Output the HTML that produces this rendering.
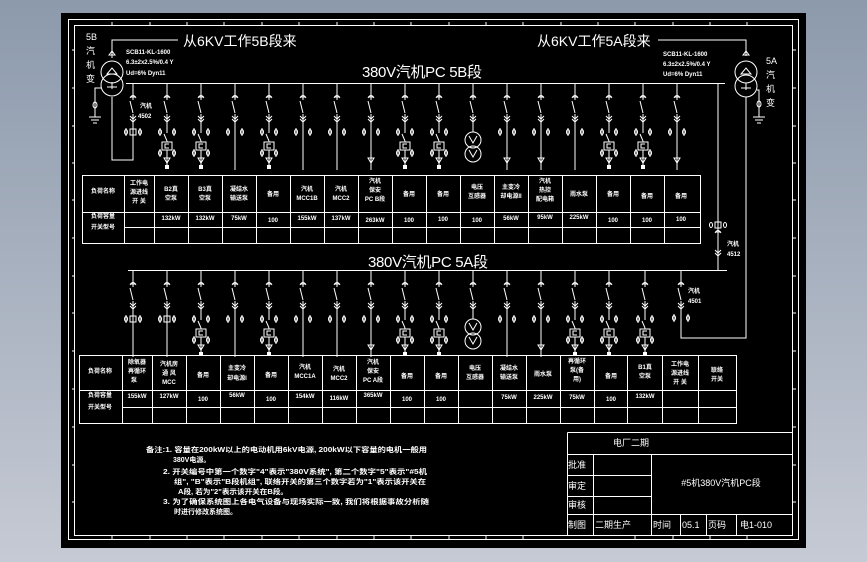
<!DOCTYPE html>
<html><head><meta charset="utf-8"><style>
html,body{margin:0;padding:0;}
body{width:867px;height:562px;overflow:hidden;background:linear-gradient(180deg,#8c9aac 0%,#a9b2c0 50%,#c6cad4 100%);}
svg{position:absolute;left:0;top:0;}
text{fill:#fff;font-family:"Liberation Sans","Noto Sans CJK SC",sans-serif;}
.t{font-size:6px;font-weight:bold;}
</style></head><body>
<svg width="867" height="562" viewBox="0 0 867 562">
<defs>
<g id="head" stroke="#fff" stroke-width="1" fill="none">
<path d="M0,0 V13 M-3,15 Q0,10 3,15 M-3,14 H3 M0,13 V17 M-3,18 L0,30 M0,31 V33 M-3,33 L0,36 L3,33 M-3,36 L0,39 L3,36 M0,33 V40"/>
</g>
<g id="ct" stroke="#fff" stroke-width="1" fill="none"><ellipse cx="-7" cy="0" rx="1.5" ry="2.5"/><path d="M-7,-4 V4"/><ellipse cx="7" cy="0" rx="1.5" ry="2.5"/><path d="M7,-4 V4"/></g>
<g id="plain"><use href="#head"/><use href="#ct" y="49"/><path d="M0,40 V87" stroke="#fff"/></g>
<g id="plaint"><use href="#head"/><use href="#ct" y="49"/><path d="M0,40 V87 M-3,75 H3 L0,80 Z" stroke="#fff" fill="none"/></g>
<g id="box"><use href="#head"/><use href="#ct" y="49"/><use href="#ct" y="70"/>
<path d="M0,40 V50 M-3,51 L0,58 M0,58 V59 M0,67 V82 M-3,75 H3 L0,80 Z" stroke="#fff" fill="none"/>
<rect x="-5" y="59" width="10" height="8" stroke="#fff" fill="none"/><path d="M2,61 H-2 V65 H2" stroke="#fff" fill="none"/>
<rect x="-2" y="82" width="4" height="4" fill="#fff"/></g>
<g id="pt"><use href="#head"/><path d="M0,40 V49" stroke="#fff"/>
<circle cx="0" cy="57" r="8" stroke="#fff" fill="none"/><circle cx="0" cy="71" r="8" stroke="#fff" fill="none"/>
<path d="M-4,53 L0,60 L4,53 M-4,67 L0,74 L4,67" stroke="#fff" fill="none"/></g>
<g id="ct3" stroke="#fff" fill="none"><use href="#head"/><use href="#ct" y="49"/><rect x="-3" y="46" width="6" height="6"/><path d="M0,40 V87"/></g>
</defs>
<rect x="61" y="13" width="745" height="535" fill="#000"/>
<g stroke="#fff" fill="none" stroke-width="1">
<rect x="68.5" y="19.5" width="730" height="520"/>
<rect x="74.5" y="25.5" width="718" height="510"/>
<path d="M72,50 h3 M72,88 h3 M72,126 h3 M72,163 h3 M72,200 h3 M72,238 h3 M72,276 h3 M72,313 h3 M72,351 h3 M72,389 h3 M72,427 h3 M72,465 h3 M72,502 h3 M796,50 h-3 M796,88 h-3 M796,126 h-3 M796,163 h-3 M796,200 h-3 M796,238 h-3 M796,276 h-3 M796,313 h-3 M796,351 h-3 M796,389 h-3 M796,427 h-3 M796,465 h-3 M796,502 h-3 M112,22 v3 M150,22 v3 M187,22 v3 M224,22 v3 M262,22 v3 M299,22 v3 M337,22 v3 M374,22 v3 M411,22 v3 M449,22 v3 M486,22 v3 M523,22 v3 M561,22 v3 M598,22 v3 M635,22 v3 M673,22 v3 M710,22 v3 M747,22 v3 M112,536 v3 M150,536 v3 M187,536 v3 M224,536 v3 M262,536 v3 M299,536 v3 M337,536 v3 M374,536 v3 M411,536 v3 M449,536 v3 M486,536 v3 M523,536 v3 M635,536 v3 M673,536 v3 M710,536 v3 M747,536 v3"/>
<path d="M112,58 V40 H178 M152,40 h8"/>
<path d="M109,55 l3,-4 l3,4 z"/>
<circle cx="112" cy="72" r="11"/><circle cx="112" cy="85" r="11"/>
<path d="M107,74 l5,-6 l5,6 z M107,87 h10 M112,82 v7"/>
<path d="M101,88 H95 V117 M89,117 h12 M91,120 h8 M93,123 h4"/>
<ellipse cx="95" cy="105" rx="2" ry="3"/>
<path d="M112,97 V160 H133 V140"/>
<path d="M126,83.5 H725"/>
<path d="M658,40 H746 V56 M680,40 h8"/>
<path d="M743,55 l3,-4 l3,4 z"/>
<circle cx="746" cy="72" r="11"/><circle cx="746" cy="86" r="11"/>
<path d="M741,74 l5,-6 l5,6 z M741,88 h10 M746,83 v7"/>
<path d="M757,90 H759 V117 M753,117 h12 M755,120 h8 M757,123 h4"/>
<ellipse cx="759" cy="104" rx="2" ry="3"/>
<path d="M746,97 V338 H681 V310"/>
<path d="M718,83 V270"/>
<path d="M128,270.5 H727"/>
<path d="M715,233 Q718,228 721,233 M715,232 h6 M715,250 L718,253 L721,250 M715,253 L718,256 L721,253"/>
<ellipse cx="711" cy="225" rx="1.5" ry="2.5"/><ellipse cx="725" cy="225" rx="1.5" ry="2.5"/><rect x="715" y="222" width="6" height="6"/>
</g>
<g>
<use href="#head" x="133" y="83"/><use href="#ct" x="133" y="132"/><rect x="130" y="129" width="6" height="6" stroke="#fff" fill="none"/><path d="M133,123 V140" stroke="#fff"/>
<use href="#box" x="167" y="83"/><use href="#box" x="201" y="83"/><use href="#plain" x="235" y="83"/>
<use href="#box" x="269" y="83"/><use href="#plain" x="303" y="83"/><use href="#plain" x="337" y="83"/>
<use href="#plaint" x="371" y="83"/><use href="#box" x="405" y="83"/><use href="#box" x="439" y="83"/>
<use href="#pt" x="473" y="83"/><use href="#plaint" x="507" y="83"/><use href="#plaint" x="541" y="83"/>
<use href="#plain" x="575" y="83"/><use href="#box" x="609" y="83"/><use href="#box" x="643" y="83"/><use href="#plaint" x="677" y="83"/>
</g>
<g>
<use href="#ct3" x="133" y="270"/><use href="#ct3" x="167" y="270"/><use href="#box" x="201" y="270"/>
<use href="#plain" x="235" y="270"/><use href="#box" x="269" y="270"/><use href="#plain" x="303" y="270"/>
<use href="#plain" x="337" y="270"/><use href="#plaint" x="371" y="270"/><use href="#box" x="405" y="270"/>
<use href="#box" x="439" y="270"/><use href="#pt" x="473" y="270"/><use href="#plain" x="507" y="270"/>
<use href="#plaint" x="541" y="270"/><use href="#box" x="575" y="270"/><use href="#box" x="609" y="270"/>
<use href="#box" x="645" y="270"/>
<use href="#head" x="681" y="270"/><use href="#ct" x="681" y="318"/><path d="M681,310 V338" stroke="#fff"/>
</g>
<text x="86" y="40" font-size="9">5B</text>
<text x="86" y="54" font-size="9">汽</text><text x="86" y="68" font-size="9">机</text><text x="86" y="82" font-size="9">变</text>
<text x="766" y="64" font-size="9">5A</text>
<text x="766" y="78" font-size="9">汽</text><text x="766" y="92" font-size="9">机</text><text x="766" y="106" font-size="9">变</text>
<text x="183" y="46" font-size="14">从6KV工作5B段来</text>
<text x="537" y="46" font-size="14">从6KV工作5A段来</text>
<text x="126" y="54" class="t">SCB11-KL-1600</text>
<text x="126" y="64" class="t">6.3±2x2.5%/0.4 Y</text>
<text x="126" y="75" class="t">Ud=6% Dyn11</text>
<text x="663" y="56" class="t">SCB11-KL-1600</text>
<text x="663" y="66" class="t">6.3±2x2.5%/0.4 Y</text>
<text x="663" y="76" class="t">Ud=6% Dyn11</text>
<text x="362" y="77" font-size="15" textLength="120">380V汽机PC 5B段</text>
<text x="368" y="267" font-size="15" textLength="120">380V汽机PC 5A段</text>
<text x="140" y="108" class="t">汽机</text><text x="138" y="118" class="t">4502</text>
<text x="727" y="246" class="t">汽机</text><text x="727" y="256" class="t">4512</text>
<text x="688" y="293" class="t">汽机</text><text x="688" y="303" class="t">4501</text>
<g stroke="#fff" fill="none">
<path d="M82.5,175.5 H700.5 V243.5 H82.5 Z M82,212.5 H700 M124,227.5 H700"/>
<path d="M124.5,175 V243 M154.5,175 V243 M188.5,175 V243 M222.5,175 V243 M256.5,175 V243 M290.5,175 V243 M324.5,175 V243 M358.5,175 V243 M392.5,175 V243 M426.5,175 V243 M460.5,175 V243 M494.5,175 V243 M528.5,175 V243 M562.5,175 V243 M596.5,175 V243 M630.5,175 V243 M664.5,175 V243"/>
</g>
<g class="t" text-anchor="middle">
<text x="103" y="193">负荷名称</text>
<text x="139" y="185">工作电</text><text x="139" y="194">源进线</text><text x="139" y="203">开 关</text>
<text x="171" y="191">B2真</text><text x="171" y="200">空泵</text>
<text x="205" y="191">B3真</text><text x="205" y="200">空泵</text>
<text x="239" y="191">凝结水</text><text x="239" y="200">输送泵</text>
<text x="273" y="196">备用</text>
<text x="307" y="191">汽机</text><text x="307" y="200">MCC1B</text>
<text x="341" y="191">汽机</text><text x="341" y="200">MCC2</text>
<text x="375" y="183">汽机</text><text x="375" y="192">保安</text><text x="375" y="201">PC B段</text>
<text x="409" y="196">备用</text><text x="443" y="196">备用</text>
<text x="477" y="189">电压</text><text x="477" y="198">互感器</text>
<text x="511" y="189">主变冷</text><text x="511" y="198">却电源II</text>
<text x="545" y="183">汽机</text><text x="545" y="192">热控</text><text x="545" y="201">配电箱</text>
<text x="579" y="196">雨水泵</text>
<text x="613" y="196">备用</text><text x="647" y="198">备用</text><text x="681" y="198">备用</text>
<text x="103" y="218">负荷容量</text><text x="103" y="229">开关型号</text>
<text x="171" y="220">132kW</text><text x="205" y="220">132kW</text><text x="239" y="220">75kW</text><text x="273" y="222">100</text>
<text x="307" y="220">155kW</text><text x="341" y="220">137kW</text><text x="375" y="222">263kW</text>
<text x="409" y="222">100</text><text x="443" y="221">100</text><text x="477" y="222">100</text><text x="511" y="220">56kW</text>
<text x="545" y="219">95kW</text><text x="579" y="219">225kW</text><text x="613" y="222">100</text><text x="647" y="222">100</text><text x="681" y="221">100</text>
</g>
<g stroke="#fff" fill="none">
<path d="M79.5,355.5 H736.5 V423.5 H79.5 Z M79,390.5 H736 M122,407.5 H736"/>
<path d="M122.5,355 V423 M152.5,355 V423 M186.5,355 V423 M220.5,355 V423 M254.5,355 V423 M288.5,355 V423 M322.5,355 V423 M356.5,355 V423 M390.5,355 V423 M424.5,355 V423 M458.5,355 V423 M492.5,355 V423 M526.5,355 V423 M560.5,355 V423 M594.5,355 V423 M627.5,355 V423 M662.5,355 V423 M698.5,355 V423"/>
</g>
<g class="t" text-anchor="middle">
<text x="100" y="373">负荷名称</text>
<text x="137" y="364">除氧器</text><text x="137" y="373">再循环</text><text x="134" y="382">泵</text>
<text x="169" y="366">汽机房</text><text x="169" y="375">通 风</text><text x="169" y="384">MCC</text>
<text x="203" y="377">备用</text>
<text x="237" y="370">主变冷</text><text x="237" y="380">却电源I</text>
<text x="271" y="377">备用</text>
<text x="305" y="369">汽机</text><text x="305" y="378">MCC1A</text>
<text x="339" y="371">汽机</text><text x="339" y="380">MCC2</text>
<text x="373" y="364">汽机</text><text x="373" y="373">保安</text><text x="373" y="382">PC A段</text>
<text x="407" y="378">备用</text><text x="441" y="378">备用</text>
<text x="475" y="370">电压</text><text x="475" y="379">互感器</text>
<text x="509" y="370">凝结水</text><text x="509" y="379">输送泵</text>
<text x="543" y="376">雨水泵</text>
<text x="577" y="363">再循环</text><text x="577" y="372">泵(备</text><text x="577" y="381">用)</text>
<text x="611" y="378">备用</text>
<text x="645" y="369">B1真</text><text x="645" y="378">空泵</text>
<text x="680" y="366">工作电</text><text x="680" y="375">源进线</text><text x="680" y="384">开 关</text>
<text x="717" y="372">联络</text><text x="717" y="381">开关</text>
<text x="100" y="397">负荷容量</text><text x="100" y="409">开关型号</text>
<text x="137" y="398">155kW</text><text x="169" y="398">127kW</text><text x="203" y="401">100</text><text x="237" y="397">56kW</text>
<text x="271" y="401">100</text><text x="305" y="398">154kW</text><text x="339" y="400">116kW</text><text x="373" y="397">365kW</text>
<text x="407" y="401">100</text><text x="441" y="401">100</text><text x="509" y="399">75kW</text><text x="543" y="399">225kW</text>
<text x="577" y="399">75kW</text><text x="611" y="401">100</text><text x="645" y="398">132kW</text>
</g>
<g font-size="7" font-weight="bold">
<text x="146" y="452" textLength="281" lengthAdjust="spacingAndGlyphs">备注:1. 容量在200kW以上的电动机用6kV电源, 200kW以下容量的电机一般用</text>
<text x="173" y="462">380V电源。</text>
<text x="163" y="474" textLength="264" lengthAdjust="spacingAndGlyphs">2. 开关编号中第一个数字"4"表示"380V系统", 第二个数字"5"表示"#5机</text>
<text x="174" y="484" textLength="252" lengthAdjust="spacingAndGlyphs">组", "B"表示"B段机组", 联络开关的第三个数字若为"1"表示该开关在</text>
<text x="178" y="494" textLength="110" lengthAdjust="spacingAndGlyphs">A段, 若为"2"表示该开关在B段。</text>
<text x="163" y="504" textLength="266" lengthAdjust="spacingAndGlyphs">3. 为了确保系统图上各电气设备与现场实际一致, 我们将根据事故分析随</text>
<text x="174" y="514">时进行修改系统图。</text>
</g>
<g stroke="#fff" fill="none">
<path d="M567.5,432.5 H792 M567.5,432.5 V535 M567,454.5 H792 M567,475.5 H651 M567,496.5 H651 M567,514.5 H792 M593.5,454 V535 M651.5,454 V535 M680.5,514 V535 M706.5,514 V535 M736.5,514 V535"/>
</g>
<text x="631" y="446" font-size="9" text-anchor="middle">电厂二期</text>
<text x="568" y="468" font-size="9">批准</text>
<text x="568" y="489" font-size="9">审定</text>
<text x="568" y="508" font-size="9">审核</text>
<text x="568" y="528" font-size="9">制图</text>
<text x="595" y="528" font-size="9">二期生产</text>
<text x="653" y="528" font-size="9">时间</text>
<text x="682" y="528" font-size="9">05.1</text>
<text x="708" y="528" font-size="9">页码</text>
<text x="740" y="528" font-size="9">电1-010</text>
<text x="721" y="486" font-size="9" text-anchor="middle">#5机380V汽机PC段</text>
</svg>
</body></html>
